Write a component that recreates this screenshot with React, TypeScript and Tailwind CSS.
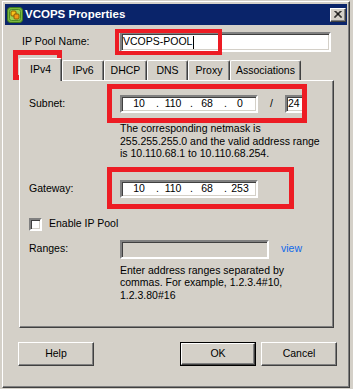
import { Fragment } from "react";

const raised =
  "border border-t-white border-l-white border-r-[#404040] border-b-[#404040] shadow-[inset_-1px_-1px_0_#808080]";
const sunken =
  "border-2 border-t-[#808080] border-l-[#808080] border-r-white border-b-white shadow-[inset_1px_1px_0_#404040,inset_-1px_-1px_0_#d4d0c8]";

function VsLogo() {
  return (
    <svg width="16" height="16" viewBox="0 0 16 16">
      <rect x="0.5" y="0.5" width="15" height="15" rx="3" fill="#7cb83f" stroke="#3f7a1c" />
      <rect x="2.5" y="2.5" width="11" height="11" rx="2" fill="#9bd255" stroke="#4d8a25" />
      <rect x="4" y="4" width="5" height="5" rx="1" fill="#f8c41c" stroke="#8a5a00" />
      <rect x="7" y="7" width="5" height="5" rx="1" fill="#f29a17" stroke="#8a5a00" />
    </svg>
  );
}

function IpBox({ parts }: { parts: string[] }) {
  return (
    <div className={`flex h-[18px] w-[138px] items-center bg-white ${sunken}`}>
      {parts.map((p, i) => (
        <Fragment key={i}>
          <span className={i < 3 ? "w-[34px] text-center" : "flex-1 text-center"}>{p}</span>
          {i < 3 && <span className="w-0 overflow-visible">.</span>}
        </Fragment>
      ))}
    </div>
  );
}

function Tab({ label, w, active }: { label: string; w: string; active?: boolean }) {
  return (
    <div
      className={`${w} flex items-center justify-center rounded-t-[2px] border-t border-l border-r border-t-white border-l-white border-r-[#404040] shadow-[inset_-1px_0_0_#808080] ${
        active ? "relative z-10 -mb-px h-[23px] bg-[#d4d0c8]" : "h-[20px]"
      }`}
    >
      {label}
    </div>
  );
}

function Button({ label, isDefault }: { label: string; isDefault?: boolean }) {
  return (
    <div className={`h-[24px] w-[76px] ${isDefault ? "border border-black" : ""}`}>
      <div className={`flex h-full w-full items-center justify-center ${raised}`}>{label}</div>
    </div>
  );
}

export default function App() {
  return (
    <div className="relative h-[389px] w-[353px] overflow-hidden bg-[#d4d0c8] font-['Liberation_Sans',Arial,sans-serif] text-[10.5px] text-black">
      <div className={`ml-[2px] mt-[1px] h-[387px] w-[348px] p-[2px] ${raised}`}>
        <div className="flex h-[21px] items-center bg-[#0a246a] pl-[2px] pr-[1px]">
          <VsLogo />
          <span className="ml-[2px] text-[11.5px] font-bold text-white">VCOPS Properties</span>
          <div className={`ml-auto flex h-[14px] w-[16px] items-center justify-center bg-[#d4d0c8] ${raised}`}>
            <svg width="8" height="7" viewBox="0 0 8 7">
              <path d="M0.5 0 L7.5 7 M1.5 0 L7.5 6 M7.5 0 L0.5 7 M6.5 0 L0.5 6" stroke="#000" strokeWidth="1" />
            </svg>
          </div>
        </div>

        <div className="pl-[14px]">
          <div className="mt-[7px] flex h-[20px] items-center">
            <span className="ml-[3px] w-[98px]">IP Pool Name:</span>
            <div className={`flex h-[20px] w-[211px] items-center bg-white pl-[1px] ${sunken}`}>
              VCOPS-POOL
              <span className="ml-[1px] inline-block h-[13px] w-px bg-black" />
            </div>
          </div>

          <div className="mt-[6px] flex h-[22px] items-end">
            <Tab label="IPv4" w="w-[43px]" active />
            <Tab label="IPv6" w="w-[42px]" />
            <Tab label="DHCP" w="w-[43px]" />
            <Tab label="DNS" w="w-[41px]" />
            <Tab label="Proxy" w="w-[42px]" />
            <Tab label="Associations" w="w-[71px]" />
          </div>

          <div className={`h-[248px] w-[315px] pl-[9px] ${raised}`}>
            <div className="mt-[14px] flex h-[18px] items-center">
              <span className="w-[91px]">Subnet:</span>
              <IpBox parts={["10", "110", "68", "0"]} />
              <span className="w-[27px] text-center">/</span>
              <div className={`flex h-[18px] w-[20px] items-center bg-white pl-[1px] ${sunken}`}>24</div>
            </div>
            <div className="ml-[91px] mt-[9px] whitespace-nowrap leading-[12.5px]">
              <div>The corresponding netmask is</div>
              <div>255.255.255.0 and the valid address range</div>
              <div>is 10.110.68.1 to 10.110.68.254.</div>
            </div>

            <div className="mt-[20px] flex h-[18px] items-center">
              <span className="w-[91px]">Gateway:</span>
              <IpBox parts={["10", "110", "68", "253"]} />
            </div>

            <div className="mt-[20px] flex h-[13px] items-center gap-[7px]">
              <div className={`h-[13px] w-[13px] bg-white ${sunken}`} />
              <span>Enable IP Pool</span>
            </div>

            <div className="mt-[9px] flex h-[19px] items-center">
              <span className="w-[91px]">Ranges:</span>
              <div className={`h-[19px] w-[149px] bg-[#d4d0c8] ${sunken}`} />
              <span className="ml-[12px] text-[#1068e8]">view</span>
            </div>
            <div className="ml-[91px] mt-[5px] whitespace-nowrap leading-[12.5px]">
              <div>Enter address ranges separated by</div>
              <div>commas. For example, 1.2.3.4#10,</div>
              <div>1.2.3.80#16</div>
            </div>
          </div>
        </div>

        <div className="mt-[14px] flex pl-[13px] pr-[10px]">
          <Button label="Help" />
          <div className="flex-1" />
          <Button label="OK" isDefault />
          <div className="ml-[5px]">
            <Button label="Cancel" />
          </div>
        </div>
      </div>

      {/* red annotation boxes drawn over the dialog */}
      <div className="absolute left-[115px] top-[29px] h-[26px] w-[107px] border-4 border-[#ed1c24]" />
      <div className="absolute left-[13px] top-[50px] h-[30px] w-[49px] border-[5px] border-[#ed1c24]" />
      <div className="absolute left-[107px] top-[84px] h-[39px] w-[200px] border-[5px] border-[#ed1c24]" />
      <div className="absolute left-[107px] top-[167px] h-[42px] w-[187px] border-[5px] border-[#ed1c24]" />
    </div>
  );
}
